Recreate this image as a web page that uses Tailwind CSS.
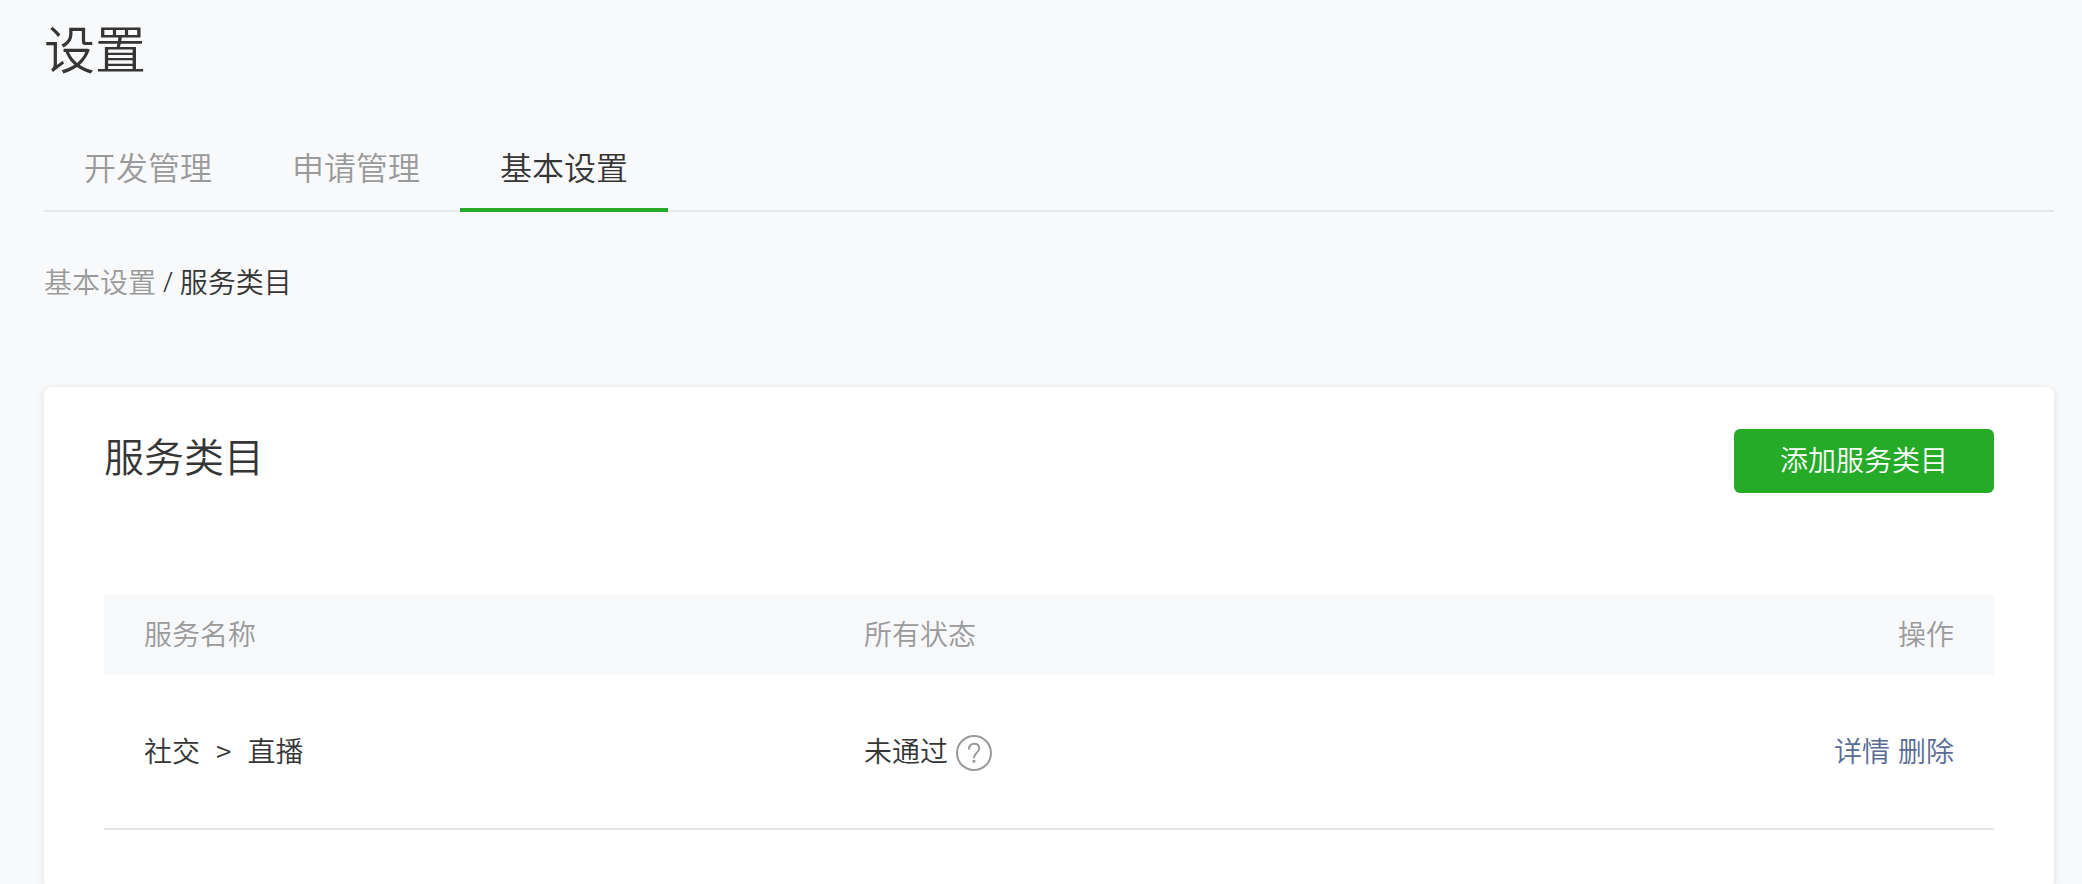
<!DOCTYPE html>
<html lang="zh-CN">
<head>
  <meta charset="UTF-8" />
  <meta name="viewport" content="width=device-width, initial-scale=1.0" />
  <title>设置</title>
  <script src="https://cdn.jsdelivr.net/npm/@tailwindcss/browser@4"></script>
</head>
<body class="min-h-screen flex flex-col bg-[#f8f9fb] text-[#353535] text-[28px] leading-10 font-[350] font-['Noto_Sans_CJK_SC',sans-serif]">
  <header class="pl-11 pr-7">
    <h1 class="pt-3 text-[51px] leading-[70px] font-[350]">设置</h1>
    <nav class="mt-9 flex border-b-2 border-[#e4e6e8] text-[32px] leading-12 text-[#9a9a9a]">
      <a href="#" class="px-10 pt-6 pb-5">开发管理</a>
      <a href="#" class="px-10 pt-6 pb-5">申请管理</a>
      <a href="#" class="-mb-0.5 px-10 pt-6 pb-[18px] border-b-4 border-[#26ab28] text-[#353535]" aria-current="page">基本设置</a>
    </nav>
    <div class="mt-[49px] flex gap-[7px]">
      <a href="#" class="text-[#9a9a9a]">基本设置</a>
      <span class="font-['Noto_Sans',sans-serif]">/</span>
      <span>服务类目</span>
    </div>
  </header>

  <main class="mt-[86px] ml-11 mr-7 grow rounded-t-lg rounded-b bg-white px-15 pt-[42px] shadow-[0_2px_8px_rgba(0,0,0,0.1)]">
    <div class="flex items-start justify-between">
      <h2 class="text-[40px] leading-13 font-[350]">服务类目</h2>
      <button type="button" class="h-16 w-[260px] pb-1 rounded-md bg-[#26ab28] text-white">添加服务类目</button>
    </div>

    <table class="mt-[102px] w-full table-fixed text-left">
      <thead class="bg-[#f6f8fa] text-[#9a9a9a]">
        <tr>
          <th class="w-[720px] h-20 px-10 pb-1 font-[350]">服务名称</th>
          <th class="px-10 pb-1 font-[350]">所有状态</th>
          <th class="px-10 pb-1 text-right font-[350]">操作</th>
        </tr>
      </thead>
      <tbody>
        <tr class="border-b-2 border-[#e4e4e8]">
          <td class="h-[154px] px-10 pb-1">社交<span class="mx-4">&gt;</span>直播</td>
          <td class="px-10 pb-1">
            <div class="flex items-center gap-2">
              未通过
              <button type="button" aria-label="未通过原因" class="pt-1.5 text-[#9a9a9a]">
                <svg class="size-9" viewBox="0 0 36 36" fill="none" stroke="currentColor" stroke-width="2">
                  <circle cx="18" cy="18" r="17" />
                  <path d="M13 14.500c0-3.600 2-5.700 5.200-5.700 3 0 5 1.900 5 4.700 0 2-1 3.200-2.700 4.600-1.800 1.500-2.500 2.500-2.500 5.200" />
                  <path d="M18 24.800v2.800" stroke-width="2.800" />
                </svg>
              </button>
            </div>
          </td>
          <td class="px-10 pb-1 text-[#576b95]">
            <div class="flex justify-end gap-2">
              <a href="#">详情</a>
              <a href="#">删除</a>
            </div>
          </td>
        </tr>
      </tbody>
    </table>
  </main>
</body>
</html>
